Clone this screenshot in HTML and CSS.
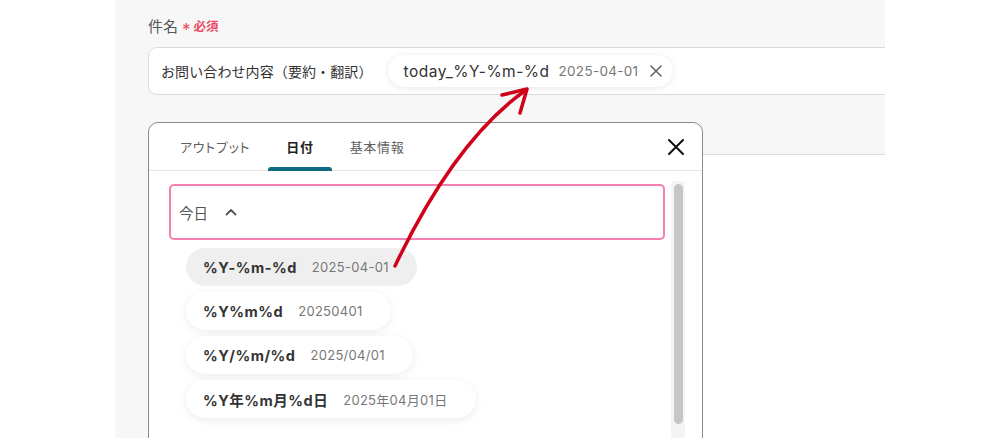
FILE: index.html
```html
<!DOCTYPE html>
<html lang="ja">
<head>
<meta charset="utf-8">
<link rel="stylesheet" href="styles.css">
</head>
<body>
<div class="panel">
  <div class="field">
    <div class="label">件名<span class="req"><span class="star">*</span>必須</span></div>
    <div class="input">
      <span class="input-text">お問い合わせ内容（要約・翻訳）</span>
      <span class="chip"><span class="chip-key">today_%Y-%m-%d</span><span class="chip-val">2025-04-01</span><svg class="chip-x" width="12" height="12" viewBox="0 0 12 12"><path d="M1 1L11 11M11 1L1 11" stroke="#666" stroke-width="1.6" stroke-linecap="round"/></svg></span>
    </div>
  </div>
  <div class="input2"></div>

  <div class="popup">
    <div class="tabs">
      <div class="tab">アウトプット</div>
      <div class="tab active">日付</div>
      <div class="tab">基本情報</div>
      <svg class="close" width="18" height="18" viewBox="0 0 18 18"><path d="M2 2L16 16M16 2L2 16" stroke="#111" stroke-width="2" stroke-linecap="round"/></svg>
    </div>
    <div class="pbody">
      <div class="content">
        <div class="group">
          <span>今日</span>
          <svg class="chev" width="12" height="8" viewBox="0 0 12 8"><path d="M1.5 6.5L6 2L10.5 6.5" fill="none" stroke="#555" stroke-width="1.8" stroke-linecap="round" stroke-linejoin="round"/></svg>
        </div>
        <div class="items">
          <div class="item hover"><span class="k">%Y-%m-%d</span><span class="v">2025-04-01</span></div>
          <div class="item"><span class="k">%Y%m%d</span><span class="v">20250401</span></div>
          <div class="item"><span class="k">%Y/%m/%d</span><span class="v">2025/04/01</span></div>
          <div class="item"><span class="k">%Y年%m月%d日</span><span class="v">2025年04月01日</span></div>
        </div>
      </div>
      <div class="track"><div class="thumb"></div></div>
    </div>
  </div>
</div>
<svg class="arrow" width="1000" height="438" viewBox="0 0 1000 438">
  <path d="M395 266 Q455 140 526 90" fill="none" stroke="#d0021b" stroke-width="3.5" stroke-linecap="round"/>
  <path d="M502 95 L527 89 L520 113" fill="none" stroke="#d0021b" stroke-width="3.5" stroke-linecap="round" stroke-linejoin="round"/>
</svg>
</body>
</html>
```
FILE: styles.css
```css
html, body {
  margin: 0;
  padding: 0;
  background: #ffffff;
  overflow: hidden;
  height: 438px;
}
body {
  font-family: Inter, "Noto Sans CJK JP", sans-serif;
  color: #333;
  position: relative;
}
.panel {
  margin-left: 115px;
  width: 770px;
  height: 438px;
  background: #f7f7f8;
  overflow: hidden;
  position: relative;
  padding: 16px 0 0 33px;
  box-sizing: border-box;
}
.label {
  font-size: 15px;
  color: #555;
  height: 22px;
  line-height: 22px;
  display: flex;
  align-items: center;
}
.req {
  color: #ea4a64;
  font-size: 12.5px;
  font-weight: 700;
  margin-left: 4px;
  display: flex;
  align-items: center;
}
.star {
  font-size: 17px;
  font-weight: 400;
  margin-right: 3px;
  position: relative;
  top: 3px;
}
.input {
  margin-top: 9px;
  width: 800px;
  height: 48px;
  box-sizing: border-box;
  background: #fff;
  border: 1px solid #d6dbe2;
  border-radius: 9px;
  display: flex;
  align-items: center;
  padding-left: 12px;
}
.input-text {
  font-size: 14px;
  color: #333;
  letter-spacing: 0.1px;
}
.chip {
  margin-left: 15px;
  height: 32px;
  border-radius: 16px;
  background: #fff;
  box-shadow: 0 1px 6px rgba(0,0,0,0.10);
  display: flex;
  align-items: center;
  padding: 0 11px 0 16px;
}
.chip-key {
  font-size: 15.5px;
  color: #333;
  letter-spacing: 0.5px;
}
.chip-val {
  font-size: 13.5px;
  color: #777;
  margin-left: 9px;
  letter-spacing: 0.3px;
}
.chip-x {
  margin-left: 12px;
}
.input2 {
  margin-top: 59px;
  width: 800px;
  height: 300px;
  background: #fff;
  border-top: 1px solid #d6dbe2;
}
.popup {
  position: absolute;
  left: 33px;
  top: 122px;
  width: 555px;
  height: 360px;
  box-sizing: border-box;
  background: #fff;
  border: 1px solid #8a8a8a;
  border-radius: 10px;
}
.tabs {
  height: 47px;
  border-bottom: 1px solid #e6e6e6;
  display: flex;
  align-items: stretch;
  padding-left: 13px;
  padding-right: 17px;
}
.tab {
  font-size: 13px;
  color: #5f5f5f;
  padding: 0 18px;
  display: flex;
  align-items: center;
  position: relative;
  letter-spacing: 0.7px;
  font-feature-settings: "palt";
}
.tab.active {
  color: #222;
  font-weight: 700;
}
.tab.active::after {
  content: "";
  position: absolute;
  left: 0;
  right: 0;
  bottom: -1px;
  height: 4px;
  background: #0d6a80;
  border-radius: 3px 3px 0 0;
}
.close {
  margin-left: auto;
  align-self: center;
}
.pbody {
  display: flex;
}
.content {
  flex: 1;
  padding: 13px 6px 0 20px;
}
.group {
  height: 56px;
  box-sizing: border-box;
  border: 2px solid #f47fb1;
  border-radius: 5px;
  display: flex;
  align-items: center;
  padding-left: 8px;
  font-size: 14.5px;
  color: #555;
}
.chev {
  margin-left: 17px;
}
.items {
  padding: 8px 0 0 17px;
  display: flex;
  flex-direction: column;
  align-items: flex-start;
  gap: 6px;
}
.item {
  height: 38px;
  border-radius: 19px;
  background: #fff;
  box-shadow: 0 2px 8px rgba(0,0,0,0.08);
  display: flex;
  align-items: center;
  padding: 0 28px 0 17px;
}
.item.hover {
  background: #efefef;
  box-shadow: none;
}
.k {
  font-size: 14.5px;
  font-weight: 700;
  color: #333;
  letter-spacing: 0.5px;
}
.v {
  font-size: 13px;
  color: #777;
  margin-left: 15px;
  letter-spacing: 0.3px;
}
.track {
  width: 14px;
  margin: 10px 17px 0 0;
  height: 270px;
  background: #f4f4f4;
  border-radius: 3px;
  padding: 3px 2px 0 3px;
  box-sizing: border-box;
}
.thumb {
  width: 9px;
  height: 240px;
  background: #c6c6c6;
  border-radius: 5px;
}
.arrow {
  position: absolute;
  left: 0;
  top: 0;
  pointer-events: none;
}
```
